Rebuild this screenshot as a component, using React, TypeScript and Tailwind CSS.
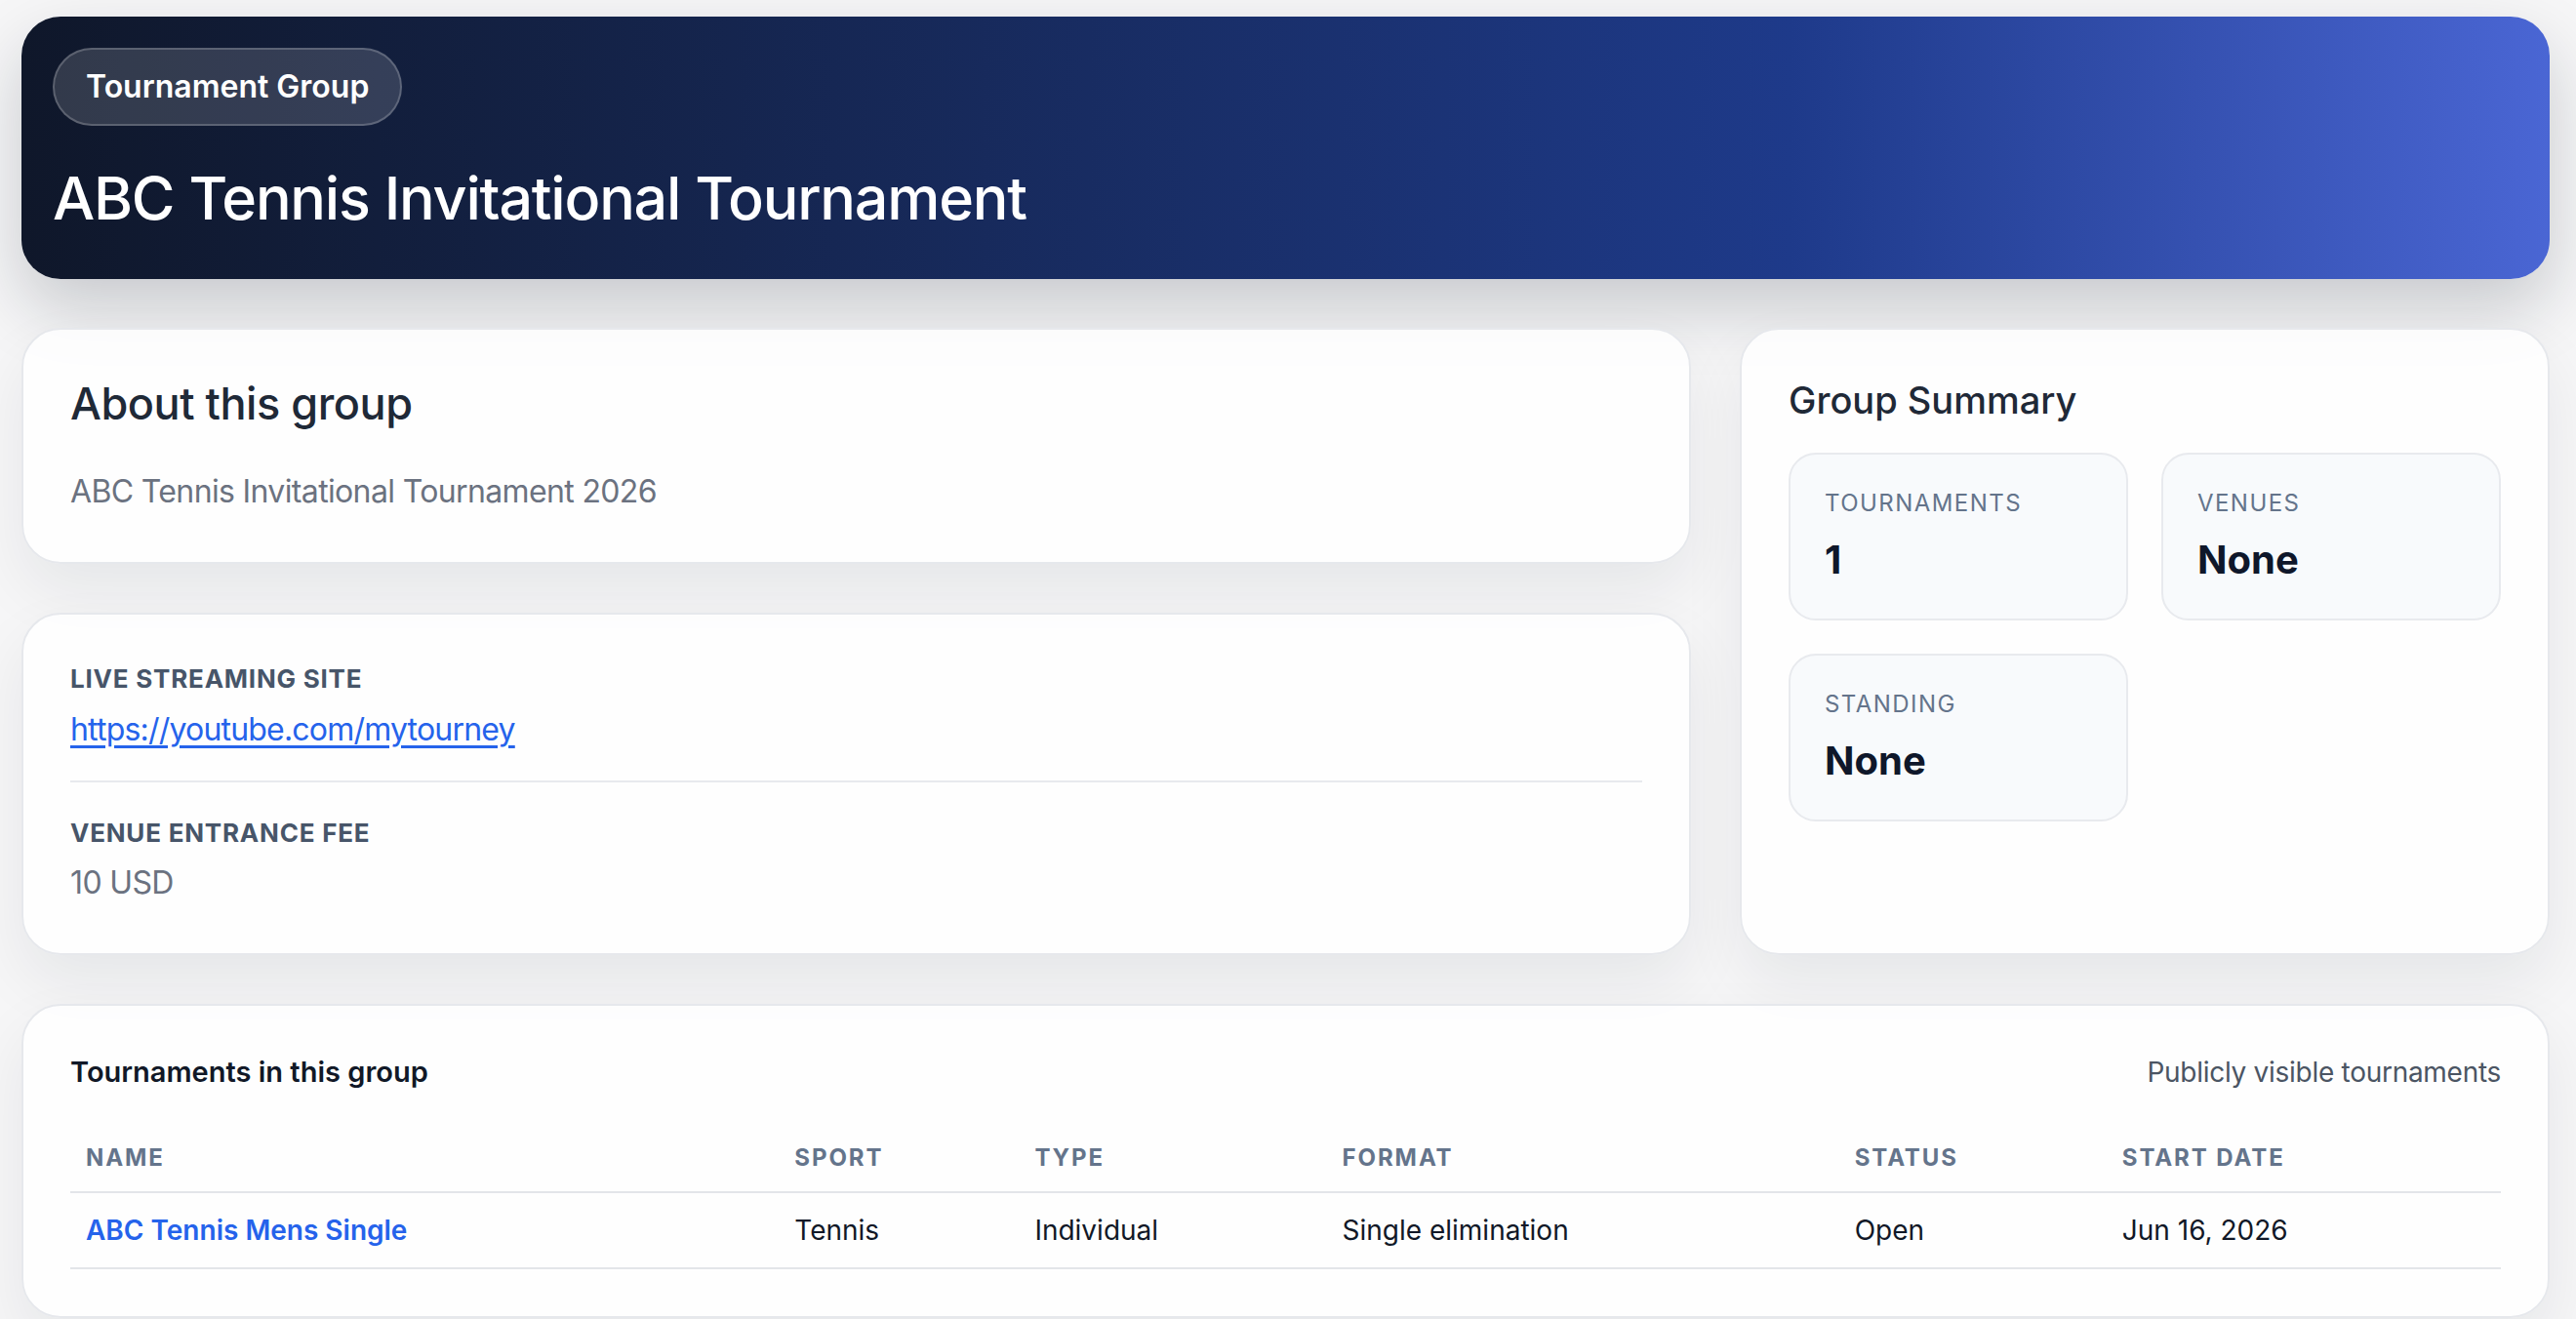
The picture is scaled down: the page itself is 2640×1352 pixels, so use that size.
import React from 'react';

const stats = [
  { label: 'Tournaments', value: '1' },
  { label: 'Venues', value: 'None' },
  { label: 'Standing', value: 'None' },
];

const tournaments = [
  {
    name: 'ABC Tennis Mens Single',
    sport: 'Tennis',
    type: 'Individual',
    format: 'Single elimination',
    status: 'Open',
    start: 'Jun 16, 2026',
  },
];

const columns = [
  { label: 'Name', width: 'w-[726px]' },
  { label: 'Sport', width: 'w-[246px]' },
  { label: 'Type', width: 'w-[315px]' },
  { label: 'Format', width: 'w-[525px]' },
  { label: 'Status', width: 'w-[274px]' },
  { label: 'Start date', width: 'w-[404px]' },
];

const card =
  'rounded-[40px] border-2 border-[#e6e8ec] bg-white/85 shadow-[0_28px_64px_rgba(15,23,42,0.07)]';

function StatBox({ label, value }: { label: string; value: string }) {
  return (
    <div className="rounded-[28px] border-2 border-[#e8eaee] bg-[#f8fafc] pl-[35px] pr-6 pt-[34px] pb-[36px]">
      <div className="text-[24px] leading-[32px] uppercase tracking-[0.06em] text-[#64748b]">{label}</div>
      <div className="mt-[18px] text-[40px] leading-[48px] font-bold text-[#0f172a]">{value}</div>
    </div>
  );
}

export default function App() {
  return (
    <div className="min-h-screen bg-[#f6f6f7] pl-[22px] pr-[27px] pt-[17px] pb-10 font-['Inter','Noto_Sans',sans-serif] antialiased">
      <div className="flex flex-col gap-[50px]">
        {/* hero */}
        <header className="rounded-[40px] bg-linear-to-r from-[#0f172a] via-[#1e3a8a] via-70% to-[#4a66d4] px-8 pt-8 pb-[47px] shadow-[0_30px_70px_rgba(15,23,42,0.2)]">
          <span className="inline-flex h-[80px] items-center rounded-full border-2 border-white/20 bg-white/15 px-8 text-[32px] font-semibold text-white">
            Tournament Group
          </span>
          <h1 className="mt-[38px] text-[61px] leading-[72px] font-medium tracking-[-0.02em] text-white">
            ABC Tennis Invitational Tournament
          </h1>
        </header>

        <div className="grid grid-cols-[minmax(0,1fr)_830px] gap-[50px]">
          <div className="flex flex-col gap-[50px]">
            <section className={`${card} p-12`}>
              <h2 className="text-[45px] leading-[56px] font-medium tracking-[-0.01em] text-[#1f2937]">
                About this group
              </h2>
              <p className="mt-[38px] text-[32px] leading-[48px] tracking-[-0.02em] text-[#6b7280]">
                ABC Tennis Invitational Tournament 2026
              </p>
            </section>

            <section className={`${card} p-12`}>
              <div className="border-b-2 border-[#e8eaee] pb-[28px]">
                <div className="text-[26px] leading-[36px] font-bold uppercase tracking-[0.03em] text-[#475569]">
                  Live streaming site
                </div>
                <a
                  href="#"
                  className="mt-[10px] block w-fit text-[32px] leading-[48px] tracking-[-0.025em] text-[#2563eb] underline underline-offset-[5px]"
                >
                  https://youtube.com/mytourney
                </a>
              </div>
              <div className="pt-[34px]">
                <div className="text-[26px] leading-[36px] font-bold uppercase tracking-[0.03em] text-[#475569]">
                  Venue entrance fee
                </div>
                <div className="mt-[9px] text-[32px] leading-[48px] tracking-[-0.02em] text-[#6b7280]">10 USD</div>
              </div>
            </section>
          </div>

          <section className={`${card} p-12`}>
            <h2 className="text-[38px] leading-[48px] font-medium text-[#1f2937]">Group Summary</h2>
            <div className="mt-[30px] grid grid-cols-2 gap-[34px]">
              {stats.map((s) => (
                <StatBox key={s.label} label={s.label} value={s.value} />
              ))}
            </div>
          </section>
        </div>

        <section className={`${card} p-12`}>
          <div className="flex items-center justify-between">
            <h3 className="text-[29px] leading-[40px] font-semibold text-[#111827]">Tournaments in this group</h3>
            <span className="text-[28px] leading-[40px] tracking-[-0.01em] text-[#4b5563]">
              Publicly visible tournaments
            </span>
          </div>
          <table className="mt-[34px] w-full table-fixed border-collapse text-left">
            <colgroup>
              {columns.map((c) => (
                <col key={c.label} className={c.width} />
              ))}
            </colgroup>
            <thead>
              <tr className="border-b-2 border-[#e3e5e9]">
                {columns.map((c) => (
                  <th
                    key={c.label}
                    className="px-4 py-[18px] text-[24px] leading-[32px] font-bold uppercase tracking-[0.08em] text-[#64748b]"
                  >
                    {c.label}
                  </th>
                ))}
              </tr>
            </thead>
            <tbody>
              {tournaments.map((t) => (
                <tr key={t.name} className="border-b-2 border-[#e3e5e9] text-[28px] leading-[40px] text-[#111827]">
                  <td className="px-4 py-[18px]">
                    <a href="#" className="font-semibold text-[#2563eb]">
                      {t.name}
                    </a>
                  </td>
                  <td className="px-4 py-[18px]">{t.sport}</td>
                  <td className="px-4 py-[18px]">{t.type}</td>
                  <td className="px-4 py-[18px]">{t.format}</td>
                  <td className="px-4 py-[18px]">{t.status}</td>
                  <td className="px-4 py-[18px]">{t.start}</td>
                </tr>
              ))}
            </tbody>
          </table>
        </section>
      </div>
    </div>
  );
}
